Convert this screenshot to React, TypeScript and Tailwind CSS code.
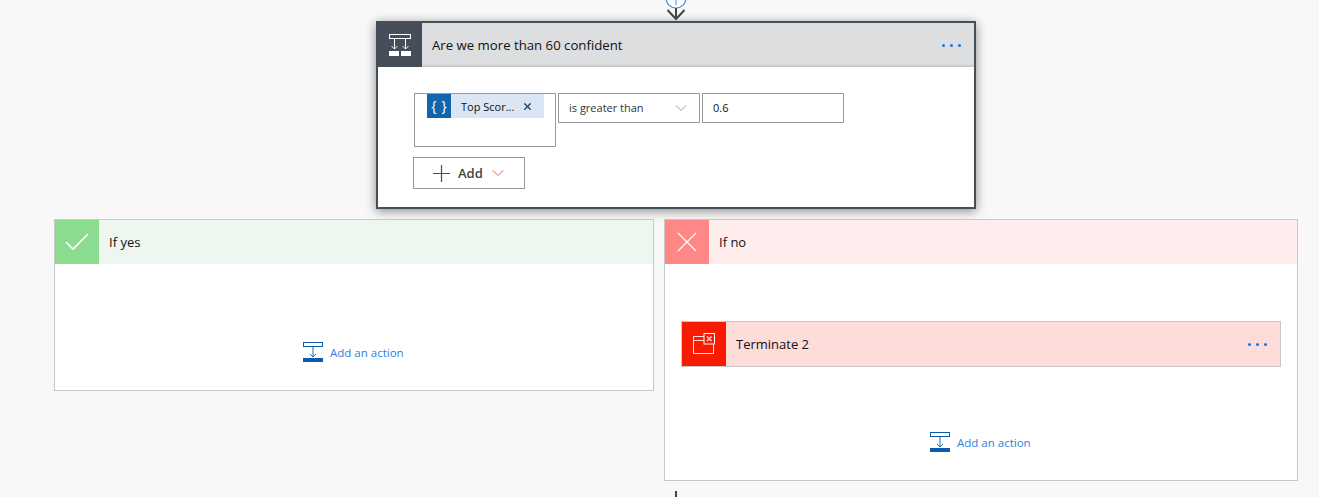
import { ChevronDown, X } from 'lucide-react'

const font = "font-['Open_Sans','Noto_Sans',sans-serif]"

function Dots({ className }: { className: string }) {
  return (
    <div className={`flex gap-[5px] ${className}`}>
      <span className="w-[3px] h-[3px] rounded-full bg-[#0f7ae5]" />
      <span className="w-[3px] h-[3px] rounded-full bg-[#0f7ae5]" />
      <span className="w-[3px] h-[3px] rounded-full bg-[#0f7ae5]" />
    </div>
  )
}

function ConditionIcon() {
  return (
    <svg width="22" height="22" viewBox="0 0 22 22" fill="none" stroke="#fff">
      <rect x="0.5" y="0.5" width="21" height="4" />
      <path d="M5.5 5v10M16.5 5v10M2.5 12l3 3 3-3M13.5 12l3 3 3-3" />
      <rect x="0" y="17" width="10" height="5" fill="#fff" stroke="none" />
      <rect x="12" y="17" width="10" height="5" fill="#fff" stroke="none" />
    </svg>
  )
}

function AddAction({ className }: { className: string }) {
  return (
    <div className={`flex items-center gap-[7px] ${className}`}>
      <svg width="20" height="20" viewBox="0 0 20 20" fill="none" stroke="#0b5cab">
        <rect x="0.5" y="0.5" width="19" height="4" />
        <path d="M10 5v10M7 12l3 3 3-3" strokeWidth="0.9" />
        <rect x="0" y="16" width="20" height="4" fill="#0b5cab" stroke="none" />
      </svg>
      <span className="text-[11.5px] text-[#2d7fe0] leading-none pt-[1px]">Add an action</span>
    </div>
  )
}

export default function App() {
  return (
    <div className={`relative h-[497px] w-[1319px] overflow-hidden bg-[#f8f8f8] pt-[21px] text-[#111] ${font}`}>
      {/* connector bits above the card and below the branches */}
      <svg className="absolute left-[665px] top-0" width="22" height="21" viewBox="0 0 22 21" fill="none">
        <circle cx="11" cy="-2" r="10" fill="#fff" stroke="#2f96ea" strokeWidth="1.2" />
        <path d="M11 -2v7" stroke="#2f96ea" />
        <path d="M2.5 10l8.5 9 8.5-9M11 8v11" stroke="#444" strokeWidth="2" />
      </svg>
      <div className="absolute left-[675px] top-[491px] w-[2px] h-[6px] bg-[#444]" />

      <div className="ml-[376px] w-[600px] h-[188px] border-2 border-[#464e58] bg-white shadow-[0_2px_10px_rgba(0,0,0,0.45)]">
        <div className="flex h-[44px] items-center bg-[#dcdee0] shadow-[inset_0_-3px_3px_-2px_rgba(0,0,0,0.16)]">
          <div className="flex h-[44px] w-[44px] items-center justify-center bg-[#444d58]">
            <ConditionIcon />
          </div>
          <span className="ml-[10px] pt-[1px] text-[13.2px] leading-none">Are we more than 60 confident</span>
          <Dots className="ml-auto mr-[13px]" />
        </div>
        <div className="pl-[36px] pt-[26px]">
          <div className="flex items-start gap-[2px]">
            <div className="h-[54px] w-[142px] border border-[#999] pl-[12px]">
              <div className="flex h-[24px] w-[117px] items-center bg-[#dae6f3]">
                <div className="flex h-[24px] w-[24px] items-center justify-center gap-[5px] bg-[#1165ae] text-[14px] leading-none text-white">
                  <span>{'{'}</span>
                  <span>{'}'}</span>
                </div>
                <span className="ml-[10px] text-[11px] leading-none">Top Scor...</span>
                <X className="ml-[8px] text-[#1a3f6b]" size={11} strokeWidth={2.8} />
              </div>
            </div>
            <div className="flex h-[30px] w-[142px] items-center justify-between border border-[#999] pl-[10px] pr-[8px] text-[11px] text-[#333]">
              <span>is greater than</span>
              <ChevronDown size={20} strokeWidth={0.8} className="text-[#4f8a55]" />
            </div>
            <div className="flex h-[30px] w-[142px] items-center border border-[#999] pl-[10px] text-[11px]">
              0.6
            </div>
          </div>
          <div className="-ml-[1px] mt-[10px] flex h-[32px] w-[112px] items-center border border-[#999] pl-[19px]">
            <svg width="17" height="17" viewBox="0 0 17 17" stroke="#3a5a3a" strokeWidth="1.2">
              <path d="M8.5 0v17M0 8.5h17" />
            </svg>
            <span className="ml-[8px] text-[13px] font-semibold leading-none text-[#444]">Add</span>
            <ChevronDown size={20} strokeWidth={1.1} className="ml-[5px] text-[#b0614a]" />
          </div>
        </div>
      </div>

      <div className="ml-[54px] mt-[10px] flex items-start gap-[10px]">
        <div className="h-[172px] w-[600px] border border-[#c8c8c8] bg-white">
          <div className="flex h-[44px] items-center bg-[#edf7ef]">
            <div className="flex h-[44px] w-[44px] items-center justify-center bg-[#8cdc8f]">
              <svg width="24" height="18" viewBox="0 0 24 18" fill="none" stroke="#fff" strokeWidth="1.6">
                <path d="M1 9l7 7L23 1" />
              </svg>
            </div>
            <span className="ml-[10px] text-[13px] leading-none pt-[1px]">If yes</span>
          </div>
          <AddAction className="mt-[78px] ml-[248px]" />
        </div>

        <div className="h-[262px] w-[634px] border border-[#c8c8c8] bg-white">
          <div className="flex h-[44px] items-center bg-[#ffeded]">
            <div className="flex h-[44px] w-[44px] items-center justify-center bg-[#ff8785]">
              <svg width="20" height="20" viewBox="0 0 20 20" stroke="#fff" strokeWidth="1.1">
                <path d="M1 1l18 18M19 1L1 19" />
              </svg>
            </div>
            <span className="ml-[10px] text-[13px] leading-none pt-[1px]">If no</span>
          </div>
          <div className="ml-[16px] mt-[57px] flex h-[46px] w-[600px] items-center border border-[#c8c8c8] bg-[#fedcda]">
            <div className="flex h-[44px] w-[44px] items-center justify-center bg-[#f71b00]">
              <svg width="22" height="22" viewBox="0 0 22 22" fill="none" stroke="#fff" strokeOpacity="0.85">
                <path d="M11 3.5H0.5V20.5H20.5V11M0.5 7.5H11" />
                <rect x="11" y="0.5" width="10.5" height="10.5" fill="#f71b00" strokeOpacity="1" />
                <path d="M14 3.5l4.5 4.5M18.5 3.5L14 8" strokeWidth="1.5" />
              </svg>
            </div>
            <span className="ml-[10px] text-[13px] leading-none">Terminate 2</span>
            <Dots className="ml-auto mr-[13px]" />
          </div>
          <AddAction className="mt-[65px] ml-[265px]" />
        </div>
      </div>
    </div>
  )
}
